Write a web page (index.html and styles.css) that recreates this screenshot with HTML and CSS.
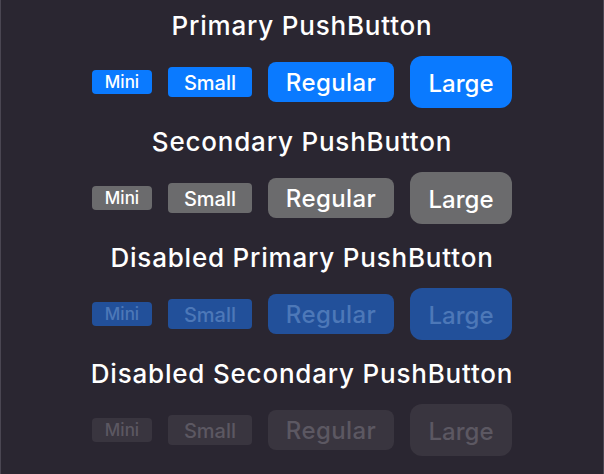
FILE: index.html
```html
<!DOCTYPE html>
<html lang="en">
<head>
<meta charset="utf-8">
<title>PushButtons</title>
<link rel="stylesheet" href="styles.css">
</head>
<body>
<main class="panel">
  <section class="group">
    <h2 class="title">Primary PushButton</h2>
    <div class="row">
      <button class="btn primary mini">Mini</button>
      <button class="btn primary small">Small</button>
      <button class="btn primary regular">Regular</button>
      <button class="btn primary large">Large</button>
    </div>
  </section>
  <section class="group">
    <h2 class="title">Secondary PushButton</h2>
    <div class="row">
      <button class="btn secondary mini">Mini</button>
      <button class="btn secondary small">Small</button>
      <button class="btn secondary regular">Regular</button>
      <button class="btn secondary large">Large</button>
    </div>
  </section>
  <section class="group">
    <h2 class="title">Disabled Primary PushButton</h2>
    <div class="row">
      <button class="btn primary-disabled mini" disabled>Mini</button>
      <button class="btn primary-disabled small" disabled>Small</button>
      <button class="btn primary-disabled regular" disabled>Regular</button>
      <button class="btn primary-disabled large" disabled>Large</button>
    </div>
  </section>
  <section class="group">
    <h2 class="title">Disabled Secondary PushButton</h2>
    <div class="row">
      <button class="btn secondary-disabled mini" disabled>Mini</button>
      <button class="btn secondary-disabled small" disabled>Small</button>
      <button class="btn secondary-disabled regular" disabled>Regular</button>
      <button class="btn secondary-disabled large" disabled>Large</button>
    </div>
  </section>
</main>
</body>
</html>
```

FILE: styles.css
```css
html, body {
  margin: 0;
  padding: 0;
  height: 100%;
  background: #2a2631;
}

.panel {
  box-sizing: border-box;
  height: 474px;
  border-left: 1px solid #4a4652;
  border-right: 1px solid #4a4652;
  padding-top: 10px;
  display: flex;
  flex-direction: column;
  gap: 18px;
  font-family: Inter, "Noto Sans", sans-serif;
}

.group {
  display: flex;
  flex-direction: column;
  align-items: center;
  gap: 14px;
}

.title {
  margin: 0;
  font-size: 26px;
  line-height: 32px;
  font-weight: 500;
  letter-spacing: 0.8px;
  color: #ffffff;
}

.row {
  display: flex;
  align-items: center;
  justify-content: center;
  gap: 16px;
  height: 52px;
}

.btn {
  display: flex;
  align-items: center;
  justify-content: center;
  border: none;
  padding: 0;
  margin: 0;
  font-family: Inter, "Noto Sans", sans-serif;
  font-weight: 500;
  color: #ffffff;
}

.mini {
  width: 60px;
  height: 24px;
  border-radius: 4px;
  font-size: 17px;
}

.small {
  width: 84px;
  height: 30px;
  border-radius: 4px;
  font-size: 20px;
  padding-top: 2px;
}

.regular {
  width: 126px;
  height: 40px;
  border-radius: 8px;
  font-size: 24px;
  letter-spacing: 0.4px;
}

.large {
  width: 102px;
  height: 52px;
  border-radius: 12px;
  font-size: 24px;
  padding-top: 2px;
}

.primary {
  background: #0a7aff;
}

.secondary {
  background: #6b6b6d;
}

.primary-disabled {
  background: #22509a;
  color: #4d78b8;
}

.secondary-disabled {
  background: #39353f;
  color: #5c5862;
}
```
